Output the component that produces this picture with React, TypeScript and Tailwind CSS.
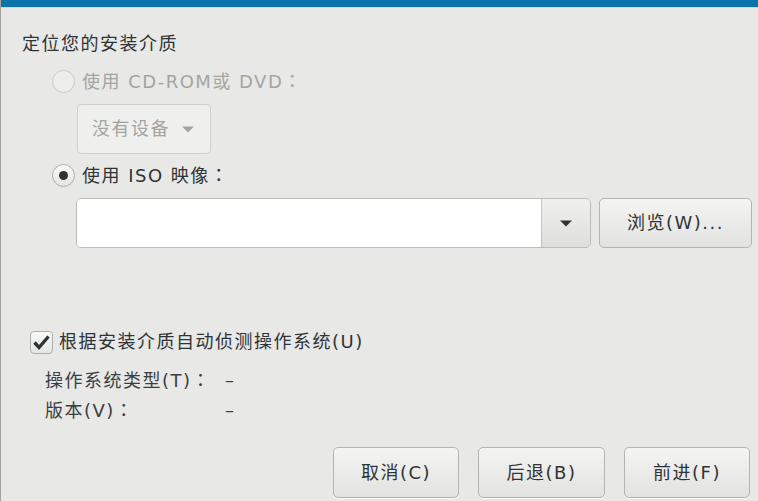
import React from "react";

const font = { fontFamily: '"DejaVu Sans", "Noto Sans CJK SC", sans-serif' };

function Colon() {
  return <span style={{ fontFamily: '"Noto Sans CJK TC", sans-serif' }}>：</span>;
}

function Arrow({ color }: { color: string }) {
  return (
    <svg width="12" height="7" viewBox="0 0 12 7" className="shrink-0">
      <path d="M0 0.5 L12 0.5 L6 6.5 Z" fill={color} />
    </svg>
  );
}

function Btn({ label, w }: { label: string; w: string }) {
  return (
    <div
      className={`${w} h-[51px] flex items-center justify-center rounded-[5px] border border-[#b4b5b1] bg-gradient-to-b from-[#f4f4f2] to-[#e2e2e0] shadow-[0_1px_0_rgba(255,255,255,0.8)] text-[#2e3436]`}
    >
      {label}
    </div>
  );
}

export default function App() {
  return (
    <div
      className="w-[758px] h-[501px] overflow-hidden bg-[#e8e8e7] text-[18px] leading-[24px] tracking-[1.5px] text-[#2e3436] flex flex-col border-l border-[#a3a4a2]"
      style={font}
    >
      <div className="h-[7px] bg-[#0b73a9] shrink-0" />
      <div className="h-[1px] bg-[#d6d7d4] shrink-0" />

      {/* Title */}
      <div className="mt-[24px] ml-[21px] h-[24px]">定位您的安装介质</div>

      {/* Radio 1 disabled */}
      <div className="mt-[13px] ml-[51px] h-[24px] flex items-center gap-[7px] text-[#a3a5a1]">
        <div className="w-[23px] h-[23px] rounded-full border border-[#c9cac7] bg-[#ededec]" />
        <span className="whitespace-pre">
          使用 CD-ROM或 DVD<Colon />
        </span>
      </div>

      {/* Disabled combo */}
      <div className="mt-[11px] ml-[76px] w-[134px] h-[50px] rounded-[4px] border border-[#cfd0cd] bg-[#efefee] flex items-center pl-[14px] gap-[12px] text-[#a3a5a1]">
        <span>没有设备</span>
        <Arrow color="#a3a5a1" />
      </div>

      {/* Radio 2 selected */}
      <div className="mt-[9px] ml-[51px] h-[24px] flex items-center gap-[7px]">
        <div className="w-[23px] h-[23px] rounded-full border border-[#aeafab] bg-gradient-to-b from-[#fafaf9] to-[#e4e4e2] flex items-center justify-center">
          <div className="w-[9px] h-[9px] rounded-full bg-[#2e3436]" />
        </div>
        <span className="whitespace-pre">
          使用 ISO 映像<Colon />
        </span>
      </div>

      {/* Entry + browse */}
      <div className="mt-[11px] ml-[75px] h-[50px] flex gap-[8px]">
        <div className="w-[515px] h-[50px] flex rounded-[5px] border border-[#bcbdb9] overflow-hidden">
          <div className="flex-1 bg-white" />
          <div className="w-[49px] border-l border-[#c4c5c1] bg-gradient-to-b from-[#f0f0ee] to-[#dededc] flex items-center justify-center">
            <Arrow color="#2e3436" />
          </div>
        </div>
        <div className="w-[153px] h-[50px] flex items-center justify-center rounded-[5px] border border-[#b4b5b1] bg-gradient-to-b from-[#f4f4f2] to-[#e2e2e0]">
          浏览(W)...
        </div>
      </div>

      {/* Checkbox */}
      <div className="mt-[82px] ml-[29px] h-[24px] flex items-center gap-[6px]">
        <div className="w-[23px] h-[23px] rounded-[4px] border border-[#aeafab] bg-gradient-to-b from-[#fafaf9] to-[#e4e4e2] flex items-center justify-center">
          <svg width="19" height="17" viewBox="0 0 19 17">
            <path d="M2.5 8.5 L7 13.5 L16.5 2.5" fill="none" stroke="#2e3436" strokeWidth="3.4" strokeLinejoin="miter" />
          </svg>
        </div>
        <span>根据安装介质自动侦测操作系统(U)</span>
      </div>

      {/* Info rows */}
      <div className="mt-[14px] ml-[44px] h-[24px] flex items-center text-[#3a3e3f]">
        <span className="w-[180px]">
          操作系统类型(T)<Colon />
        </span>
        <span>–</span>
      </div>
      <div className="mt-[6px] ml-[44px] h-[24px] flex items-center text-[#3a3e3f]">
        <span className="w-[180px]">
          版本(V)<Colon />
        </span>
        <span>–</span>
      </div>

      {/* Buttons */}
      <div className="mt-[25px] ml-[332px] flex gap-[19px]">
        <Btn label="取消(C)" w="w-[126px]" />
        <Btn label="后退(B)" w="w-[127px]" />
        <Btn label="前进(F)" w="w-[126px]" />
      </div>
    </div>
  );
}
